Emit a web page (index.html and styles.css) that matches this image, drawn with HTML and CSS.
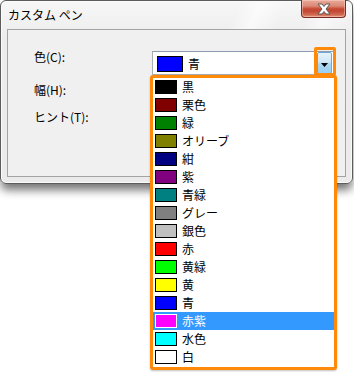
FILE: index.html
```html
<!DOCTYPE html>
<html lang="ja">
<head>
<meta charset="utf-8">
<title>カスタム ペン</title>
<link rel="stylesheet" href="styles.css">
</head>
<body>
<div class="window">
  <div class="titlebar">
    <span class="title">カスタム ペン</span>
    <div class="close">
      <svg width="16" height="12" viewBox="0 0 16 12">
        <path d="M2 1 L6 1 L8 3.5 L10 1 L14 1 L10 6 L14 11 L10 11 L8 8.5 L6 11 L2 11 L6 6 Z" fill="#ffffff" stroke="#5a5a5a" stroke-width="1" stroke-linejoin="round"/>
      </svg>
    </div>
  </div>
  <div class="panel">
    <div class="field">
      <span class="label">色(C):</span>
      <div class="combo">
        <span class="combo-swatch"></span>
        <span class="combo-text">青</span>
        <span class="combo-btn">
          <svg width="7" height="4" viewBox="0 0 7 4"><path d="M0 0 H7 L3.5 4 Z" fill="#000"/></svg>
        </span>
      </div>
    </div>
    <div class="field f2"><span class="label">幅(H):</span></div>
    <div class="field f3"><span class="label">ヒント(T):</span></div>
  </div>
</div>
<div class="btn-highlight"></div>
<ul class="dropdown">
  <li class="item"><span class="sw" style="background:#000000"></span>黒</li>
  <li class="item"><span class="sw" style="background:#800000"></span>栗色</li>
  <li class="item"><span class="sw" style="background:#008000"></span>緑</li>
  <li class="item"><span class="sw" style="background:#808000"></span>オリーブ</li>
  <li class="item"><span class="sw" style="background:#000080"></span>紺</li>
  <li class="item"><span class="sw" style="background:#800080"></span>紫</li>
  <li class="item"><span class="sw" style="background:#008080"></span>青緑</li>
  <li class="item"><span class="sw" style="background:#808080"></span>グレー</li>
  <li class="item"><span class="sw" style="background:#c0c0c0"></span>銀色</li>
  <li class="item"><span class="sw" style="background:#ff0000"></span>赤</li>
  <li class="item"><span class="sw" style="background:#00ff00"></span>黄緑</li>
  <li class="item"><span class="sw" style="background:#ffff00"></span>黄</li>
  <li class="item"><span class="sw" style="background:#0000ff"></span>青</li>
  <li class="item selected"><span class="sw" style="background:#ff00ff"></span>赤紫</li>
  <li class="item"><span class="sw" style="background:#00ffff"></span>水色</li>
  <li class="item"><span class="sw" style="background:#ffffff"></span>白</li>
</ul>
</body>
</html>
```

FILE: styles.css
```css
html, body {
  margin: 0;
  padding: 0;
}
body {
  width: 354px;
  height: 377px;
  background: #ffffff;
  position: relative;
  overflow: hidden;
  font-family: "Noto Sans CJK JP", "Noto Sans", sans-serif;
  font-size: 12px;
  color: #000;
}
.window {
  box-sizing: border-box;
  width: 353px;
  height: 184px;
  border: 1px solid #5c5c5c;
  border-radius: 6px;
  background:
    linear-gradient(115deg, rgba(255,255,255,0) 0%, rgba(255,255,255,0) 55%, rgba(255,255,255,0.6) 60%, rgba(255,255,255,0) 66%, rgba(255,255,255,0) 72%, rgba(255,255,255,0.5) 76%, rgba(255,255,255,0) 82%),
    linear-gradient(#f7f7f7, #ececec 40px, #ebebeb);
  box-shadow: 0 7px 10px -1px rgba(0,0,0,0.55), inset 0 0 0 1px #fbfbfb;
  padding: 0 6px 6px 6px;
  display: flex;
  flex-direction: column;
}
.titlebar {
  height: 28px;
  display: flex;
  align-items: center;
  margin: 0 -6px;
  padding: 0 0 0 7px;
}
.title {
  font-size: 12px;
  line-height: 14px;
  color: #000;
  letter-spacing: 0;
}
.close {
  box-sizing: border-box;
  margin-left: auto;
  margin-right: 6px;
  align-self: flex-start;
  margin-top: -1px;
  width: 45px;
  height: 18px;
  border: 1px solid #7a2a20;
  border-top: none;
  border-radius: 0 0 4px 4px;
  background: linear-gradient(#e9aa99 0%, #dc8a77 35%, #c54a36 52%, #c34733 65%, #d0664f 85%, #e0957b 100%);
  box-shadow: inset 0 0 0 1px rgba(255,220,210,0.45);
  display: flex;
  align-items: center;
  justify-content: center;
}
.close svg {
  display: block;
}
.panel {
  box-sizing: border-box;
  height: 148px;
  border: 1px solid #a3a3a3;
  background: #f0f0f0;
  padding: 21px 0 0 26px;
}
.field {
  display: flex;
  align-items: flex-start;
}
.label {
  width: 118px;
  line-height: 12px;
  font-size: 12px;
  margin-top: 0;
}
.f2 {
  margin-top: 9px;
}
.f3 {
  margin-top: 15px;
}
.combo {
  box-sizing: border-box;
  width: 182px;
  height: 24px;
  border: 1px solid #abadb3;
  border-top-color: #8e9bb0;
  background: #ffffff;
  display: flex;
  align-items: flex-start;
  padding: 4px 1px 0 4px;
}
.combo-swatch {
  box-sizing: border-box;
  width: 26px;
  height: 16px;
  border: 1px solid #000;
  background: #0000ff;
}
.combo-text {
  margin-left: 5px;
  line-height: 16px;
}
.combo-btn {
  box-sizing: border-box;
  margin-left: auto;
  margin-top: -4px;
  width: 15px;
  height: 22px;
  border: 1px solid #6fa8d2;
  border-radius: 2px;
  background: linear-gradient(#e6f3fb 0%, #cfe7f7 45%, #aad7f3 55%, #9ccff0 100%);
  display: flex;
  align-items: center;
  justify-content: center;
  padding-top: 3px;
}
.combo-btn svg {
  display: block;
}
.btn-highlight {
  position: absolute;
  left: 314px;
  top: 47px;
  width: 22px;
  height: 29px;
  box-sizing: border-box;
  border: 3px solid #ff8a0a;
  border-radius: 2px;
}
.dropdown {
  position: absolute;
  left: 150px;
  top: 75px;
  box-sizing: border-box;
  width: 187px;
  height: 295px;
  margin: 0;
  padding: 0;
  list-style: none;
  border: 3px solid #ff8a0a;
  border-radius: 3px;
  background: #ffffff;
  box-shadow: 0 1px 2px rgba(0,0,0,0.25);
}
.item {
  height: 18px;
  display: flex;
  align-items: center;
  line-height: 18px;
  font-size: 12px;
  color: #000;
}
.sw {
  box-sizing: border-box;
  width: 22px;
  height: 14px;
  border: 1px solid #000;
  margin: 0 5px 0 2px;
}
.selected {
  background: #3399ff;
  color: #ffffff;
}
.selected .sw {
  border-color: #ffffff;
}
```
